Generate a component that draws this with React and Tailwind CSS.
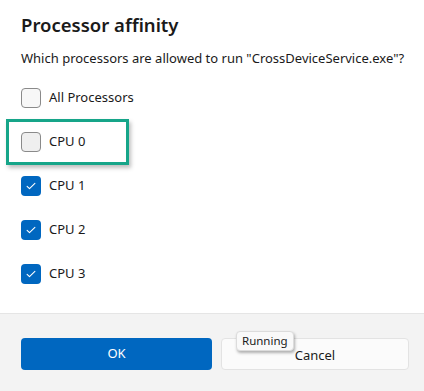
import React, { useState } from "react";

const Check = () => (
  <svg viewBox="0 0 20 20" className="w-3 h-3" fill="none">
    <path d="M3.5 10.5l4 4 9-9" stroke="white" strokeWidth="1.8" strokeLinecap="round" strokeLinejoin="round" />
  </svg>
);

const Row = ({ label, checked, onToggle, boxClass = "" }) => (
  <label className="flex items-center h-[20px] gap-[8px] cursor-pointer" onClick={onToggle}>
    {checked ? (
      <span className="w-[20px] h-[20px] rounded-[4px] bg-[#0067c0] flex items-center justify-center">
        <Check />
      </span>
    ) : (
      <span className={`w-[20px] h-[20px] rounded-[4px] border border-[#8a8a8a] ${boxClass}`} />
    )}
    <span className="text-[13px] text-[#1a1a1a]">{label}</span>
  </label>
);

export default function App() {
  const [cpus, setCpus] = useState([false, true, true, true]);
  const toggle = (i) => setCpus((c) => c.map((v, j) => (j === i ? !v : v)));

  return (
    <div className="w-[424px] h-[391px] bg-white flex flex-col font-['Noto_Sans',sans-serif]">
      <div className="flex-1 px-[21px] pt-[11px]">
        <h1 className="text-[18.5px] font-semibold text-[#1a1a1a] leading-[28px]">Processor affinity</h1>
        <p className="mt-[9px] text-[13px] text-[#1a1a1a] leading-[20px] whitespace-nowrap">
          Which processors are allowed to run "CrossDeviceService.exe"?
        </p>
        <div className="mt-[20px] flex flex-col gap-[24px]">
          <Row label="All Processors" checked={false} boxClass="bg-[#f7f7f7]" />
          <div className="relative">
            <div className="absolute left-[-15px] top-[-13px] w-[123px] h-[46px] border-[3px] border-[#16a589] shadow-[2px_3px_4px_rgba(0,0,0,0.25)] pointer-events-none" />
            <Row label="CPU 0" checked={cpus[0]} onToggle={() => toggle(0)} boxClass="bg-[#efefef]" />
          </div>
          <Row label="CPU 1" checked={cpus[1]} onToggle={() => toggle(1)} />
          <Row label="CPU 2" checked={cpus[2]} onToggle={() => toggle(2)} />
          <Row label="CPU 3" checked={cpus[3]} onToggle={() => toggle(3)} />
        </div>
      </div>
      <div className="h-[78px] bg-[#f3f3f3] border-t border-[#e5e5e5] pl-[21px] pr-[15px] pt-[24px] flex gap-[9px]">
        <button className="shrink-0 w-[191px] h-[32px] rounded-[4px] bg-[#0067c0] text-white text-[13px]">OK</button>
        <div className="relative shrink-0">
          <button className="w-[188px] h-[32px] rounded-[4px] bg-[#fbfbfb] border border-[#e3e3e3] text-[#1a1a1a] text-[13px] pt-[3px]">
            Cancel
          </button>
          <div className="absolute left-[15px] top-[-7px] px-[5px] h-[20px] flex items-center bg-[#f9f9f9] border border-[#dcdcdc] rounded-[4px] shadow-[1px_2px_3px_rgba(0,0,0,0.3)] text-[11.5px] text-[#1a1a1a]">
            Running
          </div>
        </div>
      </div>
    </div>
  );
}
